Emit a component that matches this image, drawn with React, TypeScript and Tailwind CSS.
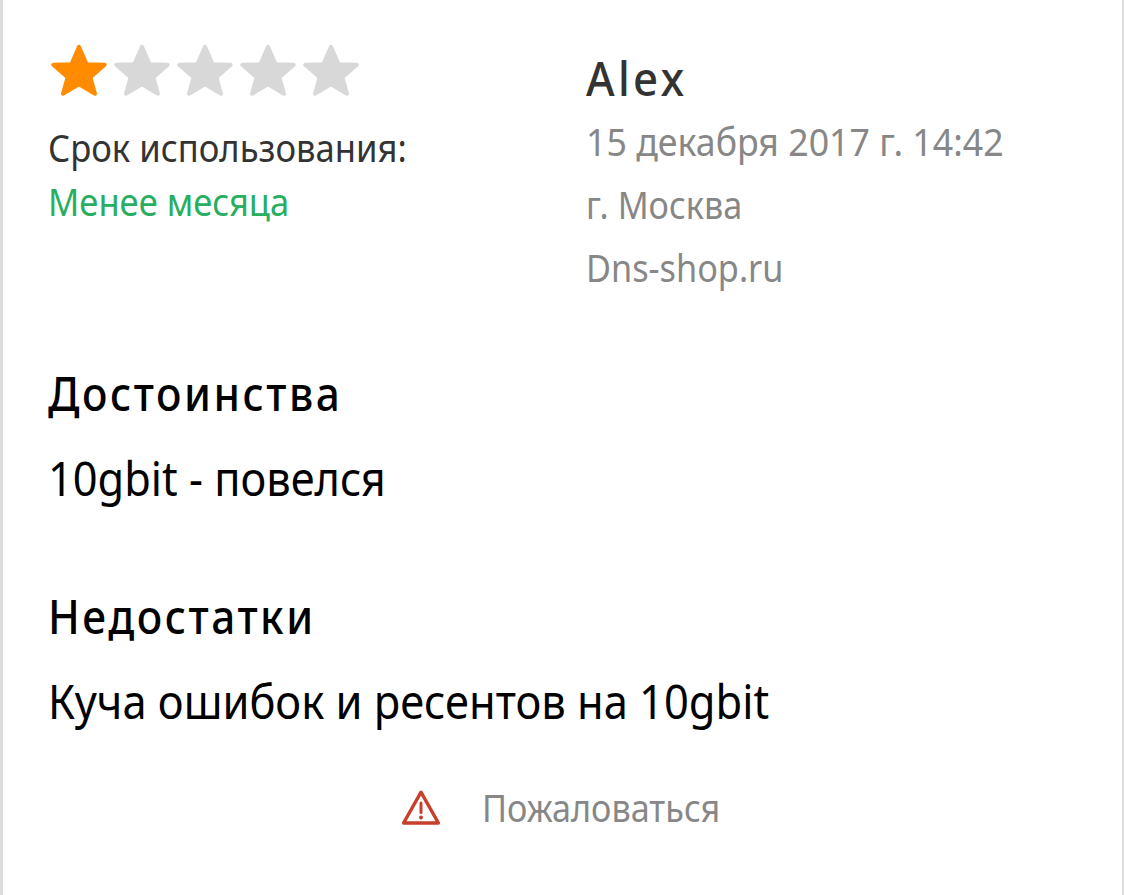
import React from "react";

const Star = ({ active }: { active?: boolean }) => (
  <svg
    viewBox="0 0 56 53"
    className={`w-14 h-[53px] ${active ? "text-[#ff8c00]" : "text-[#d8d8d8]"}`}
    fill="currentColor"
    stroke="currentColor"
    strokeWidth="4"
    strokeLinejoin="round"
  >
    <path d="M28 2.8 35.6 20.3 53.7 20.7 39.4 33.3 44 49.7 28 40.3 12 49.7 16.6 33.3 2.3 20.7 20.4 20.3Z" />
  </svg>
);

const Warning = () => (
  <svg viewBox="0 0 40 36" className="w-10 h-9" fill="none" stroke="#c6402d">
    <path d="M20 3.2 37.4 34H2.6Z" strokeWidth="3.4" strokeLinejoin="round" />
    <path d="M20 14v9.5" strokeWidth="3" strokeLinecap="round" />
    <circle cx="20" cy="28.5" r="2" fill="#c6402d" stroke="none" />
  </svg>
);

const App = () => {
  return (
    <div className="w-[1124px] h-[895px] overflow-hidden bg-white border-l-[3px] border-r-2 border-[#dcdcdc] pl-[45px] font-['Noto_Sans',sans-serif] text-[39px] whitespace-nowrap">
      <div className="flex h-[361px]">
        <div className="w-[538px] pt-11">
          <div className="flex gap-[7px] pl-[3px]">
            <Star active />
            <Star />
            <Star />
            <Star />
            <Star />
          </div>
          <div className="mt-[23px] leading-[54px]">
            <p className="origin-left scale-x-[0.888] text-[#333333]">
              Срок использования:
            </p>
            <p className="origin-left scale-x-[0.886] text-[#27ae60]">
              Менее месяца
            </p>
          </div>
        </div>
        <div className="pt-[47px] leading-[63px] text-[#878787]">
          <p className="origin-left scale-x-[0.93] tracking-[0.076em] text-[47px] leading-[63px] font-medium text-[#333333]">
            Alex
          </p>
          <p className="-mt-px origin-left scale-x-[0.916]">
            15 декабря 2017 г. 14:42
          </p>
          <p className="origin-left scale-x-[0.876]">г. Москва</p>
          <p className="origin-left scale-x-[0.878]">Dns-shop.ru</p>
        </div>
      </div>
      <div className="text-[47px] leading-[64px] text-black">
        <h2 className="origin-left scale-x-90 tracking-[0.06em] font-medium">
          Достоинства
        </h2>
        <p className="mt-[21px] origin-left scale-x-[0.922]">
          10gbit - повелся
        </p>
        <h2 className="mt-[74px] origin-left scale-x-90 tracking-[0.06em] font-medium">
          Недостатки
        </h2>
        <p className="mt-[21px] origin-left scale-x-[0.924]">
          Куча ошибок и ресентов на 10gbit
        </p>
      </div>
      <div className="mt-[47px] pl-[353px] flex items-center gap-[41px] leading-[54px] text-[#878787]">
        <Warning />
        <span className="origin-left scale-x-[0.877]">Пожаловаться</span>
      </div>
    </div>
  );
};

export default App;
